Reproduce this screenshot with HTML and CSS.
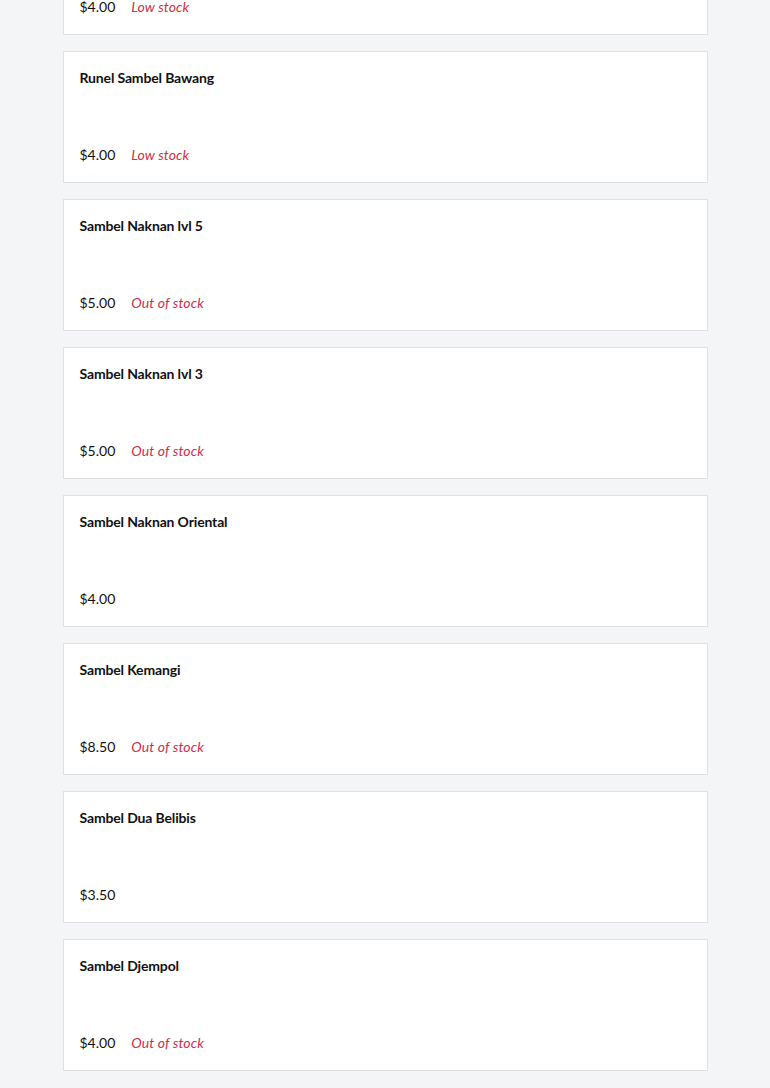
FILE: index.html
```html
<!DOCTYPE html>
<html lang="en">
<head>
<meta charset="utf-8">
<title>Products</title>
<link rel="stylesheet" href="styles.css">
</head>
<body>
<main class="list">
  <div class="card">
    <div class="name">Sambel Bawang</div>
    <div class="meta"><span class="price">$4.00</span><span class="stock">Low stock</span></div>
  </div>
  <div class="card">
    <div class="name">Runel Sambel Bawang</div>
    <div class="meta"><span class="price">$4.00</span><span class="stock">Low stock</span></div>
  </div>
  <div class="card">
    <div class="name">Sambel Naknan lvl 5</div>
    <div class="meta"><span class="price">$5.00</span><span class="stock">Out of stock</span></div>
  </div>
  <div class="card">
    <div class="name">Sambel Naknan lvl 3</div>
    <div class="meta"><span class="price">$5.00</span><span class="stock">Out of stock</span></div>
  </div>
  <div class="card">
    <div class="name">Sambel Naknan Oriental</div>
    <div class="meta"><span class="price">$4.00</span></div>
  </div>
  <div class="card">
    <div class="name">Sambel Kemangi</div>
    <div class="meta"><span class="price">$8.50</span><span class="stock">Out of stock</span></div>
  </div>
  <div class="card">
    <div class="name">Sambel Dua Belibis</div>
    <div class="meta"><span class="price">$3.50</span></div>
  </div>
  <div class="card">
    <div class="name">Sambel Djempol</div>
    <div class="meta"><span class="price">$4.00</span><span class="stock">Out of stock</span></div>
  </div>
</main>
</body>
</html>
```
FILE: styles.css
```css
html, body {
  margin: 0;
  padding: 0;
  background: #f4f5f7;
}
body {
  font-family: "Lato", "Noto Sans", sans-serif;
  font-size: 14px;
  color: #111;
  overflow: hidden;
}
.list {
  width: 645px;
  margin: -97px auto 0;
  display: flex;
  flex-direction: column;
  gap: 16px;
}
.card {
  box-sizing: border-box;
  height: 132px;
  background: #fff;
  border: 1px solid #dfe1e4;
  padding: 16px;
  display: flex;
  flex-direction: column;
  justify-content: space-between;
}
.name {
  font-weight: 700;
  line-height: 20px;
  letter-spacing: -0.15px;
}
.meta {
  display: flex;
  gap: 16px;
  line-height: 20px;
  padding-bottom: 1px;
}
.stock {
  color: #cc3048;
  font-style: italic;
  letter-spacing: 0.1px;
}
```
